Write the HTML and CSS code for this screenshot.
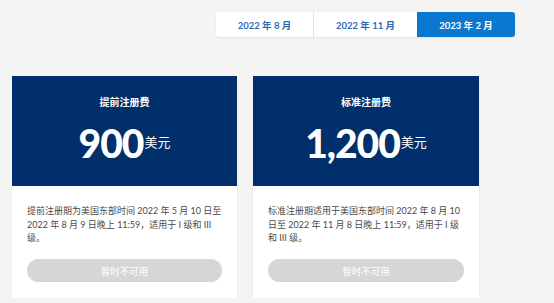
FILE: index.html
```html
<!DOCTYPE html>
<html lang="zh">
<head>
    <meta charset="UTF-8">
    <meta name="viewport" content="width=device-width, initial-scale=1.0">
    <title>注册费</title>
    <link rel="stylesheet" href="styles.css">
</head>
<body>
    <div class="tabs-row">
        <div class="tabs">
            <button class="tab">2022 年 8 月</button>
            <button class="tab">2022 年 11 月</button>
            <button class="tab active">2023 年 2 月</button>
        </div>
    </div>

    <div class="cards">
        <div class="card">
            <div class="card-head">
                <h3>提前注册费</h3>
                <div class="price"><span class="amount">900</span><span class="currency">美元</span></div>
            </div>
            <div class="card-body">
                <p>提前注册期为美国东部时间 2022 年 5 月 10 日至 2022 年 8 月 9 日晚上 11:59，适用于 I 级和 III 级。</p>
                <button class="btn-disabled" disabled>暂时不可用</button>
            </div>
        </div>
        <div class="card">
            <div class="card-head">
                <h3>标准注册费</h3>
                <div class="price"><span class="amount">1,200</span><span class="currency">美元</span></div>
            </div>
            <div class="card-body">
                <p>标准注册期适用于美国东部时间 2022 年 8 月 10 日至 2022 年 11 月 8 日晚上 11:59，适用于 I 级和 III 级。</p>
                <button class="btn-disabled" disabled>暂时不可用</button>
            </div>
        </div>
    </div>
</body>
</html>
```

FILE: styles.css
```css
body {
    font-family: Lato, "Noto Sans CJK SC", sans-serif;
    margin: 0;
    padding: 0;
    background-color: #f4f4f4;
    color: #333333;
}

.tabs-row {
    display: flex;
    justify-content: flex-end;
    padding: 12px 39px 0 0;
}

.tabs {
    display: flex;
    background-color: #ffffff;
    border-radius: 3px;
    box-shadow: 0 1px 2px rgba(0, 0, 0, 0.08);
}

.tab {
    height: 25px;
    border: none;
    background: none;
    font-family: Lato, "Noto Sans CJK SC", sans-serif;
    font-size: 9.5px;
    font-weight: 700;
    color: #2a6bb3;
    padding: 0;
    width: 97px;
    cursor: pointer;
}

.tab + .tab {
    border-left: 1px solid #e2e2e2;
}

.tab:nth-child(2) {
    width: 104px;
}

.tab.active {
    width: 98px;
    background-color: #0a78cf;
    color: #ffffff;
    border-left: none;
    border-radius: 0 3px 3px 0;
}

.cards {
    display: flex;
    gap: 16px;
    padding: 39px 0 0 12px;
}

.card {
    width: 225px;
    background-color: #ffffff;
    box-shadow: 0 1px 2px rgba(0, 0, 0, 0.05);
}

.card:nth-child(2) {
    width: 226px;
}

.card-head {
    background-color: #002f6c;
    color: #ffffff;
    height: 110px;
    text-align: center;
    box-sizing: border-box;
    padding-top: 19px;
}

.card-head h3 {
    margin: 0;
    font-size: 10px;
    font-weight: 700;
    line-height: 14px;
}

.price {
    margin-top: 12px;
    display: flex;
    justify-content: center;
    align-items: baseline;
}

.amount {
    font-size: 39px;
    font-weight: 900;
    line-height: 44px;
    letter-spacing: -1px;
}

.currency {
    font-size: 13px;
    margin-left: 1px;
    transform: translateY(-11px);
}

.card-body {
    padding: 18px 15px 16px 15px;
}

.card-body p {
    margin: 0 0 14px 0;
    font-size: 9px;
    line-height: 13.5px;
    height: 41px;
    color: #4a4a4a;
}

.btn-disabled {
    display: block;
    width: 100%;
    height: 23px;
    border: none;
    border-radius: 12px;
    background-color: #d6d6d6;
    color: #ffffff;
    font-family: Lato, "Noto Sans CJK SC", sans-serif;
    font-size: 9.5px;
}
```
